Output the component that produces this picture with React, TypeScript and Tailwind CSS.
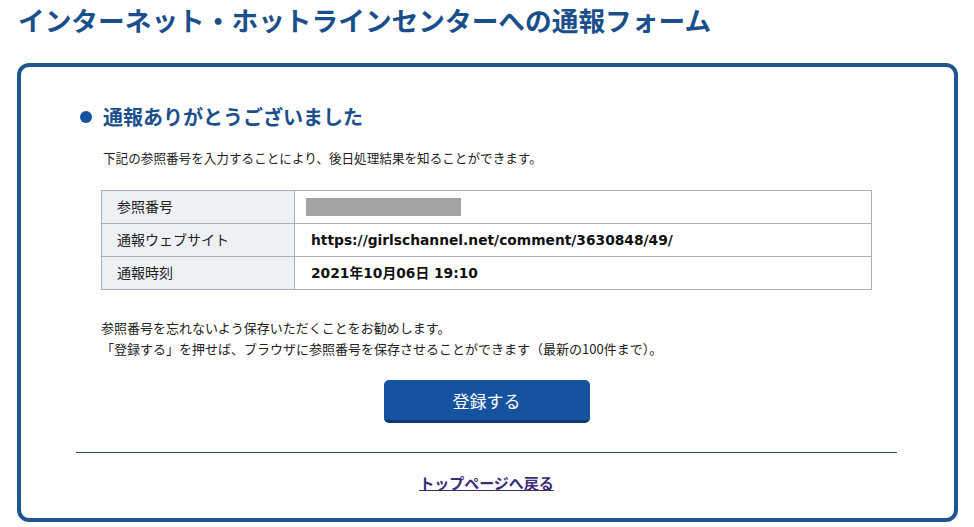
import React from "react";

const jp = { fontFamily: '"Noto Sans CJK JP", sans-serif' };
const latin = { fontFamily: '"DejaVu Sans", "Noto Sans CJK JP", sans-serif' };

export default function App() {
  return (
    <div className="w-[974px] h-[527px] bg-white overflow-hidden" style={jp}>
      <h1 className="pl-[18px] h-[40px] leading-[40px] text-[26.7px] font-bold text-[#1b4f8c] tracking-[0px]">
        インターネット・ホットラインセンターへの通報フォーム
      </h1>
      <div className="ml-[17px] mt-[23px] w-[941px] h-[459px] border-[4px] border-[#1f5590] rounded-[12px] pl-[55px] pr-[57px] pt-[36px]">
        <div className="flex items-center h-[28px]">
          <span className="ml-[4px] mr-[11px] w-[12px] h-[12px] rounded-full bg-[#1552a0]" />
          <h2 className="text-[20px] font-bold text-[#1b4f8c] leading-[28px]">通報ありがとうございました</h2>
        </div>
        <p className="mt-[17px] ml-[27px] text-[12.6px] leading-[20px] text-[#222]">
          下記の参照番号を入力することにより、後日処理結果を知ることができます。
        </p>
        <div className="mt-[22px] mx-[25px] border border-[#a7b0b9] text-[14px] text-[#222]">
          <div className="flex h-[32px]">
            <div className="w-[193px] border-r border-[#a7b0b9] bg-[#eef1f4] pl-[15px] flex items-center pb-[1px]">参照番号</div>
            <div className="flex-1 flex items-center pl-[11px]">
              <div className="w-[155px] h-[18px] bg-[#a3a3a3]" />
            </div>
          </div>
          <div className="flex h-[33px] border-t border-[#a7b0b9]">
            <div className="w-[193px] border-r border-[#a7b0b9] bg-[#eef1f4] pl-[15px] flex items-center pb-[1px]">通報ウェブサイト</div>
            <div className="flex-1 flex items-center pl-[16px] font-bold text-[13.8px] text-[#111]" style={latin}>
              https://girlschannel.net/comment/3630848/49/
            </div>
          </div>
          <div className="flex h-[33px] border-t border-[#a7b0b9]">
            <div className="w-[193px] border-r border-[#a7b0b9] bg-[#eef1f4] pl-[15px] flex items-center pb-[1px]">通報時刻</div>
            <div className="flex-1 flex items-center pl-[16px] font-bold text-[13.8px] text-[#111]" style={latin}>
              2021年10月06日 19:10
            </div>
          </div>
        </div>
        <div className="mt-[27px] ml-[25px] text-[13px] leading-[21px] text-[#222]">
          <p>参照番号を忘れないよう保存いただくことをお勧めします。</p>
          <p>「登録する」を押せば、ブラウザに参照番号を保存させることができます（最新の100件まで）。</p>
        </div>
        <div className="mt-[21px] flex justify-center">
          <button className="w-[206px] h-[43px] rounded-[5px] bg-[#1552a0] border-b-[3px] border-[#0d3870] text-white text-[17px] leading-none flex items-center justify-center">
            登録する
          </button>
        </div>
        <div className="mt-[29px] h-px bg-[#2c4a66]" />
        <div className="mt-[19px] flex justify-center">
          <a href="#" className="text-[15px] leading-[22px] font-bold text-[#3d2b75] underline">
            トップページへ戻る
          </a>
        </div>
      </div>
    </div>
  );
}
